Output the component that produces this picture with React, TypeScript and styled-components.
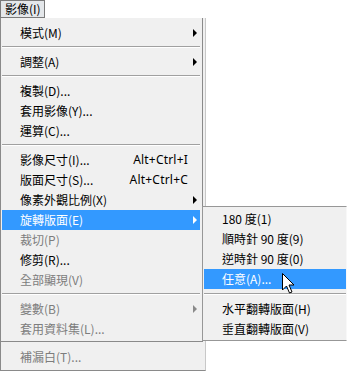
import React from "react";
import styled, { createGlobalStyle } from "styled-components";

const Global = createGlobalStyle`
  html, body { margin: 0; padding: 0; background: #ffffff; }
  body { font-family: "Noto Sans CJK TC", "Noto Sans", sans-serif; font-size: 12px; }
`;

const Screen = styled.div`
  position: relative;
  width: 347px;
  height: 371px;
  overflow: hidden;
  background: #ffffff;
  display: flex;
  flex-direction: column;
`;

const TitleButton = styled.div`
  box-sizing: border-box;
  width: 45px;
  height: 18px;
  border: 1px solid #7a7a7a;
  background: #e4e7ea;
  color: #000;
  display: flex;
  align-items: center;
  padding-left: 4px;
  font-size: 12px;
  line-height: 16px;
`;

const Menu = styled.div`
  box-sizing: border-box;
  width: 206px;
  flex: 1;
  background: #f0f0f0;
  border-left: 1px solid #8a8a8a;
  border-right: 1px solid #c8c8c8;
  border-bottom: 1px solid #8a8a8a;
  display: flex;
  flex-direction: column;
`;

const Upper = styled.div`
  margin-right: 2px;
  padding: 5px 0 2px 1px;
  border-right: 1px solid #8a8a8a;
  border-bottom: 1px solid #8a8a8a;
  display: flex;
  flex-direction: column;
`;

const Lower = styled.div`
  padding: 5px 0 2px 1px;
  display: flex;
  flex-direction: column;
`;

const Row = styled.div<{ $active?: boolean; $disabled?: boolean; $pad?: number }>`
  height: 20px;
  display: flex;
  align-items: center;
  padding-left: ${(p) => p.$pad ?? 18}px;
  padding-right: 3px;
  margin-right: 2px;
  background: ${(p) => (p.$active ? "#3399ff" : "transparent")};
  color: ${(p) => (p.$active ? "#ffffff" : p.$disabled ? "#7d7d7d" : "#000000")};
  white-space: nowrap;
  line-height: 20px;
`;

const Label = styled.span`
  flex: 1;
`;

const Shortcut = styled.span`
  font-family: "Noto Sans", sans-serif;
  font-size: 12px;
  letter-spacing: 0.2px;
`;

const ArrowBox = styled.span`
  width: 9px;
  display: flex;
  justify-content: flex-end;
  align-items: center;
`;

const Arrow = styled.span<{ $color: string }>`
  width: 0;
  height: 0;
  border-top: 4px solid transparent;
  border-bottom: 4px solid transparent;
  border-left: 4px solid ${(p) => p.$color};
`;

const Sep = styled.div<{ $h?: number }>`
  height: ${(p) => p.$h ?? 9}px;
  display: flex;
  flex-direction: column;
  padding-top: 3px;
  box-sizing: border-box;
  margin-right: 2px;
  &::before {
    content: "";
    display: block;
    height: 1px;
    background: #a0a0a0;
  }
  &::after {
    content: "";
    display: block;
    height: 1px;
    background: #ffffff;
  }
`;

const SubMenu = styled.div`
  position: absolute;
  left: 202px;
  top: 206px;
  width: 145px;
  height: 135px;
  box-sizing: border-box;
  background: #f0f0f0;
  border: 1px solid #979797;
  border-right: 1px solid #f8f8f8;
  padding: 2px 0 0 1px;
  display: flex;
  flex-direction: column;
`;

const SubRow = styled(Row)`
  margin-right: 0;
  padding-right: 0;
`;

const SubSep = styled(Sep)`
  margin-right: 0;
  padding-top: 4px;
`;

const Cursor = styled.svg`
  position: absolute;
  left: 282px;
  top: 273px;
`;

type Item =
  | { sep: true }
  | { label: string; shortcut?: string; sub?: boolean; disabled?: boolean; active?: boolean };

const upperItems: Item[] = [
  { label: "模式(M)", sub: true },
  { sep: true },
  { label: "調整(A)", sub: true },
  { sep: true },
  { label: "複製(D)..." },
  { label: "套用影像(Y)..." },
  { label: "運算(C)..." },
  { sep: true },
  { label: "影像尺寸(I)...", shortcut: "Alt+Ctrl+I" },
  { label: "版面尺寸(S)...", shortcut: "Alt+Ctrl+C" },
  { label: "像素外觀比例(X)", sub: true },
  { label: "旋轉版面(E)", sub: true, active: true },
  { label: "裁切(P)", disabled: true },
  { label: "修剪(R)..." },
  { label: "全部顯現(V)", disabled: true },
  { sep: true },
  { label: "變數(B)", sub: true, disabled: true },
  { label: "套用資料集(L)...", disabled: true },
];

const subItems: Item[] = [
  { label: "180 度(1)" },
  { label: "順時針 90 度(9)" },
  { label: "逆時針 90 度(0)" },
  { label: "任意(A)...", active: true },
  { sep: true },
  { label: "水平翻轉版面(H)" },
  { label: "垂直翻轉版面(V)" },
];

function renderItem(it: Item, i: number) {
  if ("sep" in it) return <Sep key={i} />;
  const color = it.active ? "#ffffff" : it.disabled ? "#8a8a8a" : "#000000";
  return (
    <Row key={i} $active={it.active} $disabled={it.disabled}>
      <Label>{it.label}</Label>
      {it.shortcut && <Shortcut>{it.shortcut}</Shortcut>}
      <ArrowBox>{it.sub && <Arrow $color={color} />}</ArrowBox>
    </Row>
  );
}

export default function App() {
  return (
    <>
      <Global />
      <Screen>
        <TitleButton>影像(I)</TitleButton>
        <Menu>
          <Upper>{upperItems.map(renderItem)}</Upper>
          <Lower>
            <Row $disabled>
              <Label>補漏白(T)...</Label>
            </Row>
          </Lower>
        </Menu>
        <SubMenu>
          {subItems.map((it, i) =>
            "sep" in it ? (
              <SubSep key={i} $h={10} />
            ) : (
              <SubRow key={i} $active={it.active}>
                <Label>{it.label}</Label>
              </SubRow>
            )
          )}
        </SubMenu>
        <Cursor width="14" height="22" viewBox="0 0 14 22">
          <path
            d="M0.5 0.5 L0.5 17 L4.5 13 L7.5 20 L10 19 L7 12 L12 12 Z"
            fill="#ffffff"
            stroke="#000000"
            strokeWidth="1"
            strokeLinejoin="miter"
          />
        </Cursor>
      </Screen>
    </>
  );
}
